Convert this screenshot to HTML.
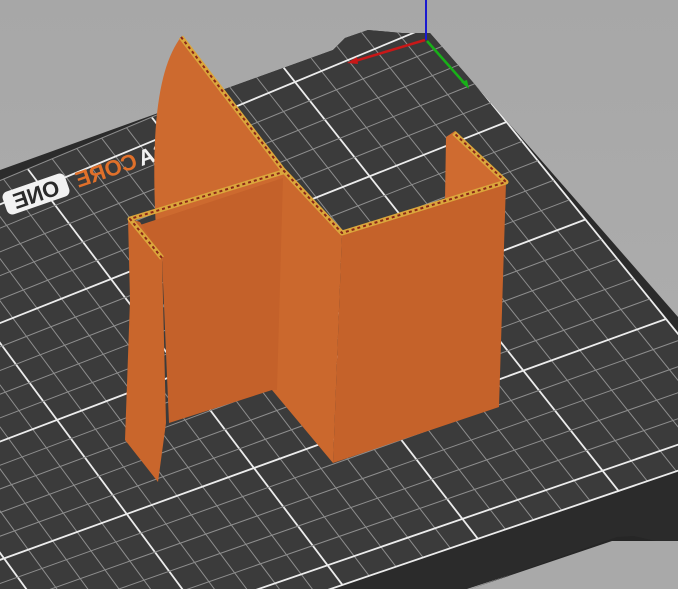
<!DOCTYPE html>
<html><head><meta charset="utf-8"><style>
html,body{margin:0;padding:0;width:678px;height:589px;overflow:hidden;background:#aaaaaa}
svg{display:block}
</style></head><body>
<svg id="s" width="678" height="589" viewBox="0 0 678 589" xmlns="http://www.w3.org/2000/svg">
<defs>
<linearGradient id="bg" x1="0" y1="0" x2="0" y2="1"><stop offset="0" stop-color="#a7a7a7"/><stop offset="1" stop-color="#b0b0b0"/></linearGradient>
<clipPath id="cp"><polygon points="0,170 333,50 345,38 368,30 402,33 430,33 678,317 678,545 617,540 467,589 0,589"/></clipPath>
</defs>
<rect width="678" height="589" fill="url(#bg)"/>
<polygon fill="#2b2b2b" points="0,170 333,50 345,38 368,30 402,33 430,33 678,317 678,545 617,540 467,589 0,589"/>
<polygon fill="#262626" points="470,589 617,537 634,536 673,545 678,545 678,589"/>
<polygon fill="#a9a9a9" points="470,589 612,541 678,541 678,589"/>
<g id="grid" clip-path="url(#cp)"></g>
<g font-family="Liberation Sans, sans-serif" font-weight="bold" transform="translate(36,194) rotate(-19) scale(-1,1)">
<rect x="-33" y="-12" width="66" height="24" rx="6" fill="#f2f2f2"/>
<text x="0" y="8" text-anchor="middle" font-size="22" fill="#2b2b2b">ONE</text>
<text x="-74" y="8" text-anchor="middle" font-size="22" fill="#e0702a">CORE</text>
<text x="-124" y="8" text-anchor="middle" font-size="22" fill="#f2f2f2">SA</text>
</g>
<!-- axes -->
<line x1="426" y1="0" x2="426" y2="40" stroke="#1a1ad0" stroke-width="2"/>
<line x1="425" y1="40" x2="355" y2="61" stroke="#c81818" stroke-width="2.5"/>
<polygon points="347,63 357,57 358,64" fill="#c81818"/>
<line x1="427" y1="41" x2="466" y2="85" stroke="#18b018" stroke-width="2.5"/>
<polygon points="469,89 461,82 467,80" fill="#18b018"/>
<!-- object -->
<path d="M181,37 C160,65 150,120 156,230 L300,230 L292,182 Z" fill="#cd6a2f"/>
<polygon points="283,172 342,233 333,463 272,390 277,180" fill="#cb682d"/>
<polygon points="140,225 283,178 277,390 272,390 169,423 162,258" fill="#c4612a"/>
<polygon points="128,218 140,222 162,258 166,423 158,482 125,440 130,300" fill="#c9662c"/>
<polygon points="342,233 506,182 499,407 333,463" fill="#c5622a"/>
<polygon points="446,137 455,131 506,182 460,197 445,200" fill="#cf6b30"/>
<g fill="none" stroke-linejoin="round">
<polyline points="162,258 130,219 283,172" stroke="#dba63c" stroke-width="5"/>
<polyline points="162,258 130,219 283,172" stroke="#8a2618" stroke-width="2" stroke-dasharray="3 3"/>
<polyline points="181,37 283,170 342,233 506,182 454,133" stroke="#dba63c" stroke-width="5"/>
<polyline points="181,37 283,170 342,233 506,182 454,133" stroke="#8a2618" stroke-width="2" stroke-dasharray="3 3"/>
</g>
</svg>
<script>
(function(){
var src=[[50,10],[0,160],[150,160],[150,60]],dst=[[295,82],[666,319],[254,468],[111,279]];
var A=[],b=[];
for(var i=0;i<4;i++){var x=src[i][0],y=src[i][1],X=dst[i][0],Y=dst[i][1];
A.push([x,y,1,0,0,0,-X*x,-X*y]);b.push(X);
A.push([0,0,0,x,y,1,-Y*x,-Y*y]);b.push(Y);}
var n=8;
for(var c=0;c<n;c++){var p=c;for(var r=c+1;r<n;r++)if(Math.abs(A[r][c])>Math.abs(A[p][c]))p=r;
var t=A[c];A[c]=A[p];A[p]=t;t=b[c];b[c]=b[p];b[p]=t;
for(var r=0;r<n;r++){if(r==c)continue;var f=A[r][c]/A[c][c];for(var k=c;k<n;k++)A[r][k]-=f*A[c][k];b[r]-=f*b[c];}}
var h=[];for(var i=0;i<n;i++)h.push(b[i]/A[i][i]);
function P(u,v){var w=h[6]*u+h[7]*v+1;return[(h[0]*u+h[1]*v+h[2])/w,(h[3]*u+h[4]*v+h[5])/w];}
var g=document.getElementById('grid'),ns='http://www.w3.org/2000/svg';
var poly=document.createElementNS(ns,'polygon');
var c1=P(0,0),c2=P(260,0),c3=P(260,220),c4=P(0,220);
poly.setAttribute('points',[c1,c2,c3,c4].map(function(q){return q.join(',')}).join(' '));
poly.setAttribute('fill','#3b3b3b');g.appendChild(poly);
function L(a,bb,maj){var l=document.createElementNS(ns,'line');l.setAttribute('x1',a[0]);l.setAttribute('y1',a[1]);l.setAttribute('x2',bb[0]);l.setAttribute('y2',bb[1]);
l.setAttribute('stroke',maj?'#ececec':'#8e8e8e');l.setAttribute('stroke-width',maj?1.8:1);g.appendChild(l);}
for(var u=0;u<=260;u+=10)L(P(u,0),P(u,220),u%50==0);
for(var v=0;v<=220;v+=10)L(P(0,v),P(260,v),((v-10)%50==0)||v==220);
})();
</script>
</body></html>
